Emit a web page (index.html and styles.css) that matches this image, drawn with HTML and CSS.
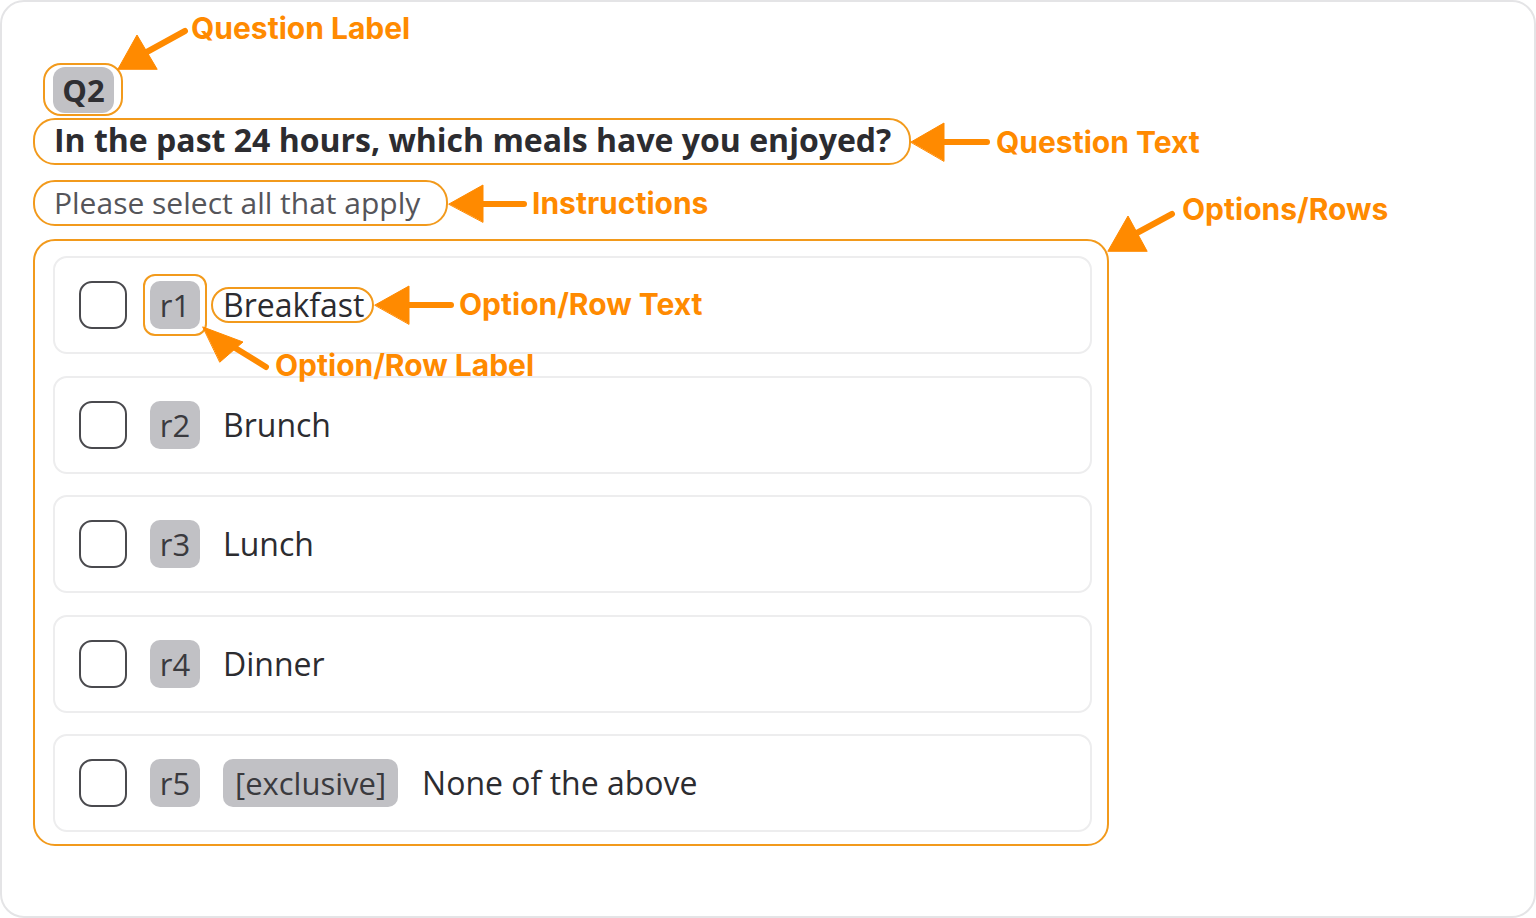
FILE: index.html
```html
<!DOCTYPE html>
<html lang="en">
<head>
<meta charset="utf-8">
<title>Question anatomy</title>
<link rel="stylesheet" href="styles.css">
</head>
<body>
<div class="card">
  <div class="hl hl-q">
    <span class="qlabel">Q2</span>
  </div>
  <div class="hl hl-text">
    <h1 class="qtext">In the past 24 hours, which meals have you enjoyed?</h1>
  </div>
  <div class="hl hl-instr">
    <p class="instr">Please select all that apply</p>
  </div>
  <div class="hl hl-options">
    <div class="row">
      <span class="box"></span>
      <span class="hl-rlabel"><span class="rlabel">r1</span></span>
      <span class="hl-rtext"><span class="rtext">Breakfast</span></span>
    </div>
    <div class="row">
      <span class="box"></span>
      <span class="rlabel">r2</span>
      <span class="rtext">Brunch</span>
    </div>
    <div class="row">
      <span class="box"></span>
      <span class="rlabel">r3</span>
      <span class="rtext">Lunch</span>
    </div>
    <div class="row">
      <span class="box"></span>
      <span class="rlabel">r4</span>
      <span class="rtext">Dinner</span>
    </div>
    <div class="row">
      <span class="box"></span>
      <span class="rlabel">r5</span>
      <span class="rlabel tag">[exclusive]</span>
      <span class="rtext">None of the above</span>
    </div>
  </div>

  <svg class="arrows" width="1536" height="918" viewBox="0 0 1536 918" aria-hidden="true">
    <g fill="#FF8A00" stroke="#FF8A00" stroke-width="6" stroke-linecap="round" stroke-linejoin="round">
      <line x1="185" y1="31" x2="145" y2="53"/>
      <polygon stroke-width="1" points="118,69 137,35 157,69"/>
      <line x1="944" y1="142" x2="987" y2="142"/>
      <polygon stroke-width="1" points="911,142 944,123 944,161"/>
      <line x1="483" y1="204" x2="524" y2="204"/>
      <polygon stroke-width="1" points="449,204 483,185 483,222"/>
      <line x1="1172" y1="214" x2="1135" y2="234"/>
      <polygon stroke-width="1" points="1108,251 1128,216 1147,251"/>
      <line x1="409" y1="305" x2="451" y2="305"/>
      <polygon stroke-width="1" points="375,305 409,286 409,324"/>
      <line x1="266" y1="367" x2="232" y2="346"/>
      <polygon stroke-width="1" points="203,327 243,342 220,362"/>
    </g>
  </svg>
  <span class="note note-qlabel">Question Label</span>
  <span class="note note-qtext">Question Text</span>
  <span class="note note-instr">Instructions</span>
  <span class="note note-options">Options/Rows</span>
  <span class="note note-rtext">Option/Row Text</span>
  <span class="note note-rlabel">Option/Row Label</span>
</div>
</body>
</html>
```
FILE: styles.css
```css
* { box-sizing: border-box; }
html, body { margin: 0; padding: 0; background: #ffffff; }
body {
  font-family: "Open Sans", "Noto Sans", sans-serif;
  color: #2f2f33;
  width: 1536px;
  height: 918px;
  overflow: hidden;
}
.card {
  position: relative;
  width: 1536px;
  height: 918px;
  border: 2px solid #e4e4e6;
  border-radius: 24px;
  padding: 61px 0 0 31px;
  display: flex;
  flex-direction: column;
  align-items: flex-start;
}
.hl {
  border: 2px solid #F29A1C;
}
.hl-q {
  margin-left: 10px;
  border-radius: 18px;
  padding: 2px 7px 1px 8px;
}
.qlabel {
  display: block;
  background: #c1c1c5;
  color: #2f2f33;
  border-radius: 12px;
  font-weight: 700;
  font-size: 31px;
  line-height: 46px;
  height: 46px;
  width: 61px;
  text-align: center;
}
.hl-text {
  margin-top: 2px;
  border-radius: 22px;
  padding: 0 18px 3px 19px;
  height: 47px;
  display: flex;
  align-items: center;
}
.qtext {
  margin: 0;
  font-size: 32px;
  font-weight: 700;
  line-height: 42px;
  color: #2c2c30;
  white-space: nowrap;
}
.hl-instr {
  margin-top: 15px;
  border-radius: 22px;
  padding: 0 26px 1px 19px;
  height: 46px;
  display: flex;
  align-items: center;
}
.instr {
  margin: 0;
  font-size: 30px;
  line-height: 40px;
  color: #55555a;
  white-space: nowrap;
}
.hl-options {
  margin-top: 13px;
  width: 1076px;
  height: 607px;
  border-radius: 22px;
  padding: 15px 15px 12px 18px;
  display: flex;
  flex-direction: column;
  gap: 21.5px;
}
.row {
  height: 98px;
  flex: none;
  border: 2px solid #ededee;
  border-radius: 14px;
  padding-left: 24px;
  display: flex;
  align-items: center;
  gap: 23px;
}
.box {
  width: 48px;
  height: 48px;
  border: 2px solid #4a4a4e;
  border-radius: 13px;
  flex: none;
}
.rlabel {
  display: block;
  background: #c1c1c5;
  color: #3a3a3e;
  border-radius: 10px;
  font-size: 31px;
  line-height: 48px;
  height: 48px;
  min-width: 50px;
  padding: 0 8px;
  text-align: center;
}
.rlabel.tag {
  padding: 0 12px;
  margin-right: 1px;
}
.rtext {
  font-size: 32px;
  line-height: 42px;
  color: #2c2c30;
  white-space: nowrap;
}
.hl-rlabel {
  border: 2px solid #F29A1C;
  border-radius: 12px;
  padding: 5px;
  margin: -7px;
}
.hl-rtext {
  border: 2px solid #F29A1C;
  border-radius: 18px;
  padding: 0 7px 0 10px;
  margin: 0 -9px 0 -12px;
  height: 36px;
  display: flex;
  align-items: center;
}
.hl-rtext .rtext { line-height: 32px; }

.arrows {
  position: absolute;
  left: -2px;
  top: -2px;
  pointer-events: none;
}
.note {
  position: absolute;
  font-family: Inter, Roboto, "Liberation Sans", sans-serif;
  font-weight: 700;
  font-size: 30px;
  line-height: 28px;
  color: #FF8A00;
  white-space: nowrap;
}
.note-qlabel { left: 189px; top: 12px; }
.note-qtext { left: 994px; top: 126px; }
.note-instr { left: 530px; top: 187px; }
.note-options { left: 1180px; top: 193px; }
.note-rtext { left: 457px; top: 288px; }
.note-rlabel { left: 273px; top: 349px; }
```
